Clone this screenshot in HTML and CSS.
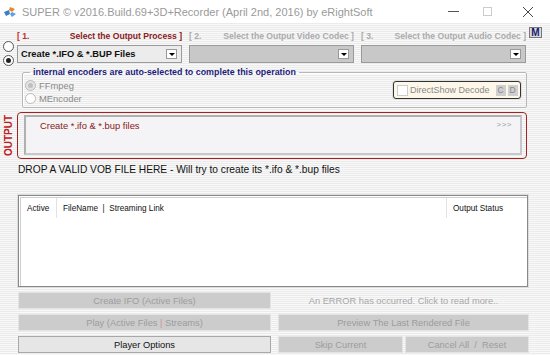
FILE: index.html
```html
<!DOCTYPE html>
<html>
	<head>
		<meta charset="utf-8" />
		<title>SUPER</title>
		<link rel="stylesheet" href="styles.css">
	</head>
	<body>
		<!--标题栏-->
		<div class="titlebar">
			<svg class="logo" width="14" height="12" viewBox="0 0 14 12">
				<path d="M7 1 L12 3 L9 6 L6 4 Z" fill="#e8862a"/>
				<path d="M1 6 L6 4 L7 8 L3 10 Z" fill="#3a7fc8"/>
				<path d="M7 8 L9 6 L13 8 L9 11 Z" fill="#5aa0e0"/>
			</svg>
			<span class="title">SUPER © v2016.Build.69+3D+Recorder (April 2nd, 2016) by eRightSoft</span>
			<div class="winctl">
				<span class="min"></span>
				<span class="max"></span>
				<svg class="close" width="10" height="10" viewBox="0 0 10 10"><path d="M0 0 L10 10 M10 0 L0 10" stroke="#444" stroke-width="1"/></svg>
			</div>
		</div>

		<div class="main">
			<!--三个步骤标题-->
			<div class="steps">
				<div class="step on"><span>[ 1.</span><span>Select the Output Process ]</span></div>
				<div class="step"><span>[ 2.</span><span>Select the Output Video Codec ]</span></div>
				<div class="step"><span>[ 3.</span><span>Select the Output Audio Codec ]</span></div>
				<span class="mbtn">M</span>
			</div>

			<!--下拉框-->
			<div class="pickers">
				<div class="sideRadios">
					<span class="radio"></span>
					<span class="radio checked"></span>
				</div>
				<div class="combo first"><span>Create *.IFO &amp; *.BUP Files</span><i class="arrow"></i></div>
				<div class="combo"><span></span><i class="arrow"></i></div>
				<div class="combo"><span></span><i class="arrow"></i></div>
			</div>

			<!--编码器-->
			<fieldset class="encoders">
				<legend>internal encoders are auto-selected to complete this operation</legend>
				<div class="encList">
					<label class="opt"><span class="radio small dim"></span>FFmpeg</label>
					<label class="opt"><span class="radio small"></span>MEncoder</label>
				</div>
				<div class="dshow">
					<span class="check"></span>
					<span class="dsText">DirectShow Decode</span>
					<span class="cd">C</span>
					<span class="cd">D</span>
				</div>
			</fieldset>

			<!--输出-->
			<div class="outRow">
				<div class="outLabel"><span>OUTPUT</span></div>
				<div class="outFrame">
					<div class="outInner">
						<span class="outText">Create *.ifo &amp; *.bup files</span>
						<span class="more">&gt;&gt;&gt;</span>
					</div>
				</div>
			</div>

			<p class="drop">DROP A VALID VOB FILE HERE - Will try to create its *.ifo &amp; *.bup files</p>

			<!--文件列表-->
			<div class="list">
				<div class="listHead">
					<span class="col active">Active</span>
					<span class="col name">FileName &nbsp;| &nbsp;Streaming Link</span>
					<span class="col status">Output Status</span>
				</div>
			</div>

			<!--按钮-->
			<div class="actions">
				<button class="btn">Create IFO (Active Files)</button>
				<span class="err">An ERROR has occurred. Click to read more..</span>
				<button class="btn">Play (Active Files <em>|</em> Streams)</button>
				<button class="btn">Preview The Last Rendered File</button>
				<button class="btn enabled">Player Options</button>
				<div class="pair">
					<button class="btn">Skip Current</button>
					<button class="btn">Cancel All &nbsp;/ &nbsp;Reset</button>
				</div>
			</div>
		</div>
	</body>
</html>
```

FILE: styles.css
```css
*{
	margin: 0;
	padding: 0;
	box-sizing: border-box;
}
body{
	width: 550px;
	height: 355px;
	overflow: hidden;
	font-family: "Liberation Sans", Arial, sans-serif;
	font-size: 9.5px;
	background: repeating-linear-gradient(#f9f9f9 0 1px, #ebebeb 1px 2px);
}
/*标题栏*/
.titlebar{
	height: 23px;
	background: #fff;
	display: flex;
	align-items: center;
	padding-left: 3px;
}
.logo{
	margin-right: 5px;
}
.title{
	font-family: "Liberation Sans", Arial, sans-serif;
	font-size: 11px;
	color: #9a9a9a;
}
.winctl{
	margin-left: auto;
	display: flex;
	align-items: center;
	padding-right: 17px;
}
.min{
	width: 11px;
	height: 1px;
	background: #555;
	margin-right: 24px;
}
.max{
	width: 9px;
	height: 9px;
	border: 1px solid #ccc;
	margin-right: 31px;
}
.main{
	padding: 0 23px 0 17px;
}
/*步骤*/
.steps{
	display: flex;
	gap: 7px;
	height: 17px;
	margin-top: 4px;
	align-items: center;
}
.step{
	width: 165px;
	flex: none;
	display: flex;
	justify-content: space-between;
	font-size: 8.6px;
	font-weight: bold;
	color: #ababab;
	white-space: nowrap;
}
.step.on span:first-child{
	color: #c03030;
}
.step.on span:last-child{
	color: #8a2020;
}
.mbtn{
	flex: none;
	width: 13px;
	height: 11px;
	margin-left: -4px;
	margin-top: -6px;
	background: #d8d8e8;
	border: 1px solid #777;
	font-size: 10px;
	font-weight: bold;
	line-height: 9px;
	text-align: center;
	color: #1a1a60;
}
/*下拉框*/
.pickers{
	display: flex;
	gap: 7px;
	height: 18px;
	margin-top: 1px;
}
.sideRadios{
	display: flex;
	flex-direction: column;
	gap: 3px;
	margin-left: -14px;
	margin-right: -7px;
	margin-top: -4px;
	width: 14px;
}
.radio{
	display: inline-block;
	flex: none;
	width: 11px;
	height: 11px;
	border: 1px solid #555;
	border-radius: 50%;
	background: #fff;
	position: relative;
}
.radio.checked::after{
	content: "";
	position: absolute;
	left: 2px;
	top: 2px;
	width: 5px;
	height: 5px;
	border-radius: 50%;
	background: #222;
}
.combo{
	width: 165px;
	height: 18px;
	border: 1px solid #9a9a9a;
	background: #c8c8c8;
	display: flex;
	align-items: center;
	padding-left: 3px;
}
.combo.first{
	background: #ececec;
	font-weight: bold;
	font-size: 9.3px;
	color: #111;
}
.arrow{
	margin-left: auto;
	margin-right: 4px;
	width: 11px;
	height: 10px;
	background: #fff;
	border: 1px solid #999;
	position: relative;
}
.arrow::after{
	content: "";
	position: absolute;
	left: 2px;
	top: 3px;
	border-left: 3px solid transparent;
	border-right: 3px solid transparent;
	border-top: 3px solid #000;
}
/*编码器*/
.encoders{
	margin: 4px 0 0 5px;
	height: 41px;
	border: 1px solid #b8b8b8;
	box-shadow: inset 1px 1px 0 #fff;
	border-radius: 2px;
	display: flex;
	justify-content: space-between;
	align-items: flex-start;
	padding: 0 5px 0 2px;
}
.encoders legend{
	margin-left: 5px;
	padding: 0 3px;
	color: #1c1c7a;
	font-weight: bold;
	font-size: 8.9px;
	line-height: 10px;
}
.encList{
	display: flex;
	flex-direction: column;
	gap: 2px;
	margin-top: 3px;
}
.opt{
	display: flex;
	align-items: center;
	gap: 3px;
	color: #8a8a8a;
	font-size: 9.4px;
	height: 11px;
}
.radio.small{
	border-color: #bbb;
}
.radio.dim{
	background: #e4e4e4;
}
.radio.dim::after{
	content: "";
	position: absolute;
	left: 2px;
	top: 2px;
	width: 5px;
	height: 5px;
	border-radius: 50%;
	background: #c0c0c0;
}
.dshow{
	width: 128px;
	height: 18px;
	margin-top: 4px;
	border: 1px solid #333;
	border-radius: 3px;
	box-shadow: 0 0 0 1px #e0e0e0;
	background: #fdf7ea;
	display: flex;
	align-items: center;
	padding-left: 3px;
}
.check{
	flex: none;
	width: 11px;
	height: 11px;
	border: 1px solid #ccc;
	background: #fff;
	margin-right: 2px;
}
.dsText{
	color: #888;
	font-size: 9px;
	white-space: nowrap;
	margin-right: 4px;
}
.cd{
	flex: none;
	width: 10px;
	height: 11px;
	background: #cfcfcf;
	color: #888;
	font-size: 8.5px;
	line-height: 11px;
	text-align: center;
	margin-left: 2px;
}
/*输出*/
.outRow{
	display: flex;
	margin-top: 4px;
}
.outLabel{
	width: 17px;
	margin-left: -17px;
	display: flex;
	align-items: center;
	justify-content: center;
}
.outLabel span{
	transform: rotate(-90deg);
	color: #c02020;
	font-weight: bold;
	font-size: 10px;
	white-space: nowrap;
	display: block;
}
.outFrame{
	width: 510px;
	height: 47px;
	border: 1px solid #a82020;
	border-radius: 4px;
	padding: 2px 4px 3px 6px;
}
.outInner{
	height: 100%;
	border: 2px solid #b0b0b0;
	border-right-color: #c8c8c8;
	border-bottom-color: #c8c8c8;
	background: #f4f4f6;
	display: flex;
	justify-content: space-between;
	align-items: flex-start;
	padding: 3px 8px 0 14px;
}
.outText{
	color: #8a1818;
	font-size: 9.4px;
}
.more{
	color: #999;
	font-size: 8px;
	letter-spacing: 0.5px;
}
.drop{
	margin-top: 4px;
	margin-left: 1px;
	font-size: 10.2px;
	color: #111;
	height: 14px;
	line-height: 14px;
}
/*文件列表*/
.list{
	margin: 18px 0 0 1px;
	width: 510px;
	height: 92px;
	background: #fff;
	border: 1px solid #888;
	box-shadow: inset 1px 1px 0 #fff, inset 2px 2px 0 #cfcfcf, 0 0 0 1px #ddd;
	padding: 2px 2px 0 2px;
}
.listHead{
	display: flex;
	height: 20px;
	font-size: 8.2px;
	color: #111;
}
.col{
	display: flex;
	align-items: center;
	padding-left: 6px;
	border-right: 1px solid #e2e2e2;
}
.active{
	width: 36px;
}
.name{
	width: 390px;
}
.status{
	border-right: none;
}
/*按钮*/
.actions{
	margin-top: 5px;
	display: grid;
	grid-template-columns: 253px 251px;
	column-gap: 7px;
	row-gap: 5px;
	padding-left: 1px;
}
.btn{
	height: 17px;
	border: 1px solid #e4e4e4;
	background: #cccccc;
	color: #9c9c9c;
	font-family: "Liberation Sans", Arial, sans-serif;
	font-size: 9.3px;
}
.btn em{
	font-style: normal;
	color: #d09090;
}
.btn.enabled{
	background: #e6e6e6;
	border: 1px solid #a8a8a8;
	color: #111;
}
.err{
	color: #a8a8a8;
	font-size: 9.3px;
	text-align: center;
	align-self: center;
}
.pair{
	display: grid;
	grid-template-columns: 125px 124px;
	gap: 2px;
}
```
